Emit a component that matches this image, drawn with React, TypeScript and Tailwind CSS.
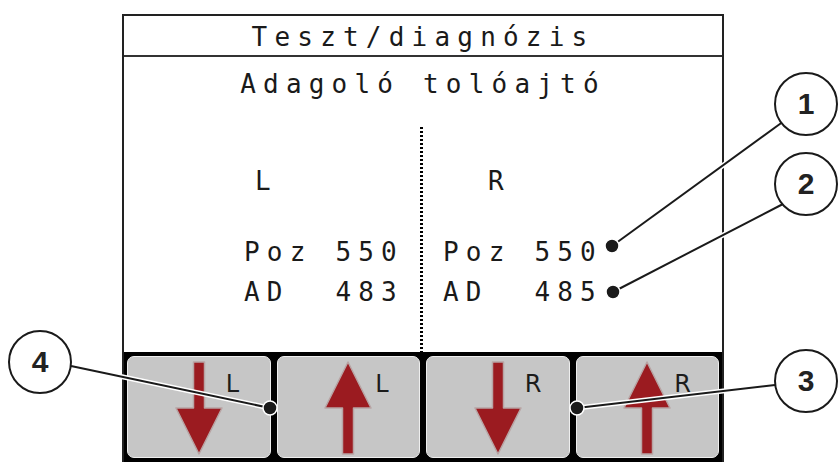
import React from "react";

const mono = { fontFamily: '"DejaVu Sans Mono", "Liberation Mono", monospace' };

function Arrow({ up }: { up?: boolean }) {
    return (
        <svg width="50" height="94" viewBox="0 0 50 94" className={up ? "rotate-180" : ""}>
            <path
                d="M19.5 1 H30.5 V47 H48 L25 93 L2 47 H19.5 Z"
                fill="#9b1b20"
                stroke="#b8a4a4"
                strokeWidth="1.5"
                strokeLinejoin="round"
            />
        </svg>
    );
}

function SoftKey({ up, label }: { up?: boolean; label: string }) {
    return (
        <div className="flex-1 h-[102px] rounded-[7px] border border-[#eeeeee] bg-[#c6c6c6] grid grid-cols-[1fr_auto_1fr]">
            <div />
            <div className="pt-[4px]">
                <Arrow up={up} />
            </div>
            <div
                className="pl-[2px] pt-[13px] text-[24px] leading-[28px] text-[#1c1c1c]"
                style={{ fontFamily: '"DejaVu Sans", sans-serif' }}
            >
                {label}
            </div>
        </div>
    );
}

function Callouts() {
    const circles = [
        { n: "1", cx: 806, cy: 104 },
        { n: "2", cx: 806, cy: 184 },
        { n: "3", cx: 806, cy: 381 },
        { n: "4", cx: 40, cy: 362 },
    ];
    const lines = [
        { x1: 612, y1: 246, x2: 784, y2: 121 },
        { x1: 613, y1: 292, x2: 783, y2: 204 },
        { x1: 577, y1: 408, x2: 775, y2: 385 },
        { x1: 270, y1: 408, x2: 71, y2: 366 },
    ];
    return (
        <svg className="absolute inset-0 pointer-events-none" width="839" height="462">
            {lines.map((l, i) => (
                <line key={"w" + i} {...l} stroke="#fff" strokeWidth="5" />
            ))}
            {lines.map((l, i) => (
                <line key={"b" + i} {...l} stroke="#1a1a1a" strokeWidth="2" />
            ))}
            {lines.map((l, i) => (
                <circle key={"d" + i} cx={l.x1} cy={l.y1} r="7" fill="#1a1a1a" stroke="#fff" strokeWidth="1.5" />
            ))}
            {circles.map((c) => (
                <g key={c.n}>
                    <circle cx={c.cx} cy={c.cy} r="31" fill="#fff" stroke="#1a1a1a" strokeWidth="2" />
                    <text
                        x={c.cx}
                        y={c.cy + 10}
                        textAnchor="middle"
                        fontSize="30"
                        fontWeight="700"
                        fill="#222"
                        fontFamily='"Liberation Sans", Arial, sans-serif'
                    >
                        {c.n}
                    </text>
                </g>
            ))}
        </svg>
    );
}

export default function App() {
    return (
        <div className="relative w-[839px] h-[462px] overflow-hidden bg-white text-[#1a1a1a]">
            <div className="ml-[122px] mt-[14px] w-[602px] h-[448px] border-x-2 border-t-2 border-[#222] flex flex-col">
                <div
                    className="h-[41px] border-b-2 border-[#333] text-center pt-[7px] text-[26px] leading-[28px] tracking-[7.2px]"
                    style={mono}
                >
                    Teszt/diagnózis
                </div>

                <div className="h-[295px] flex flex-col text-[26px] leading-[28px] tracking-[7.2px]" style={mono}>
                    <div className="h-[70px] pt-[13px] text-center whitespace-pre">Adagoló tolóajtó</div>
                    <div className="flex flex-1">
                        <div className="w-[296px] pt-[40px] whitespace-pre">
                            <div className="pl-[131px]">L</div>
                            <div className="pl-[120px] mt-[43px]">Poz 550</div>
                            <div className="pl-[120px] mt-[12px]">AD  483</div>
                        </div>
                        <div className="w-[3px] bg-[linear-gradient(to_bottom,#000_55%,transparent_55%)] bg-[length:3px_4px]" />
                        <div className="flex-1 pt-[40px] whitespace-pre">
                            <div className="pl-[65px]">R</div>
                            <div className="pl-[20px] mt-[43px]">Poz 550</div>
                            <div className="pl-[20px] mt-[12px]">AD  485</div>
                        </div>
                    </div>
                </div>

                <div className="flex-1 bg-black flex gap-[6px] px-[3px] pt-[4px]">
                    <SoftKey label="L" />
                    <SoftKey up label="L" />
                    <SoftKey label="R" />
                    <SoftKey up label="R" />
                </div>
            </div>
            <Callouts />
        </div>
    );
}
